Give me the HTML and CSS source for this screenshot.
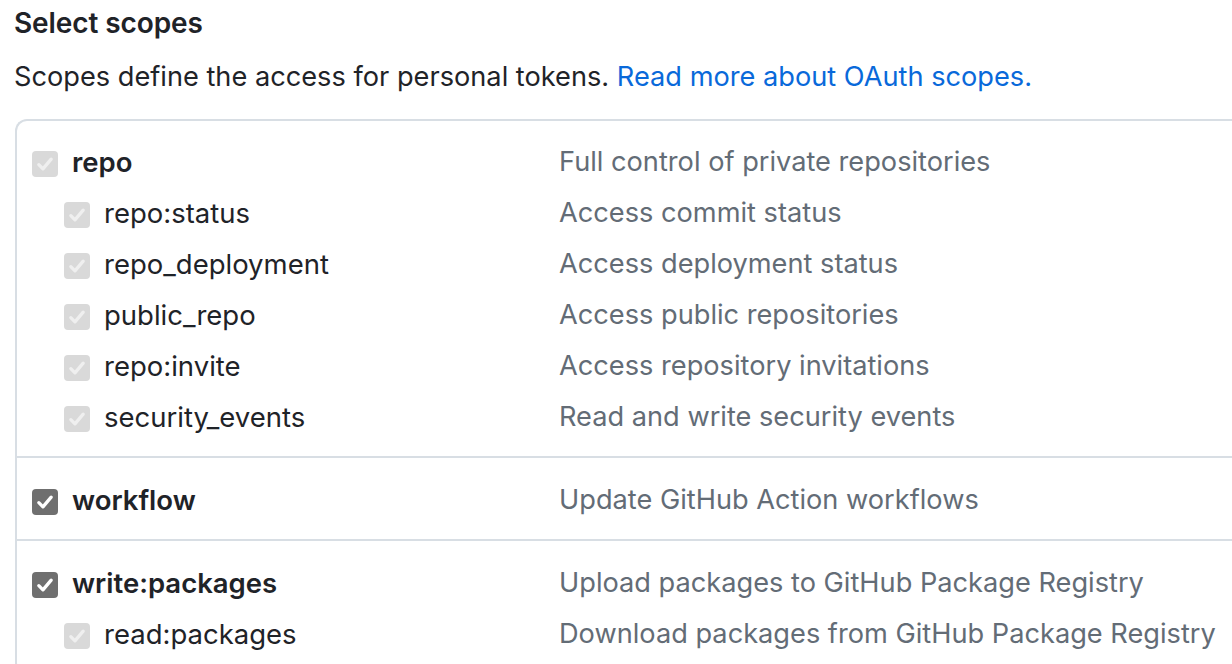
FILE: index.html
```html
<!DOCTYPE html>
<html>
<head>
<meta charset="utf-8">
<link rel="stylesheet" href="styles.css">
</head>
<body>
<div class="page">
  <h3 class="title">Select scopes</h3>
  <p class="lead">Scopes define the access for personal tokens. <a href="#" class="link">Read more about OAuth scopes.</a></p>
  <div class="box">
    <ul class="group">
      <li class="row main"><span class="cb disabled"><svg viewBox="0 0 16 16"><path d="M3.5 8.5l3 3 6-7"/></svg></span><span class="label">repo</span><span class="desc">Full control of private repositories</span></li>
      <li class="row sub"><span class="cb disabled"><svg viewBox="0 0 16 16"><path d="M3.5 8.5l3 3 6-7"/></svg></span><span class="label">repo:status</span><span class="desc">Access commit status</span></li>
      <li class="row sub"><span class="cb disabled"><svg viewBox="0 0 16 16"><path d="M3.5 8.5l3 3 6-7"/></svg></span><span class="label">repo_deployment</span><span class="desc">Access deployment status</span></li>
      <li class="row sub"><span class="cb disabled"><svg viewBox="0 0 16 16"><path d="M3.5 8.5l3 3 6-7"/></svg></span><span class="label">public_repo</span><span class="desc">Access public repositories</span></li>
      <li class="row sub"><span class="cb disabled"><svg viewBox="0 0 16 16"><path d="M3.5 8.5l3 3 6-7"/></svg></span><span class="label">repo:invite</span><span class="desc">Access repository invitations</span></li>
      <li class="row sub"><span class="cb disabled"><svg viewBox="0 0 16 16"><path d="M3.5 8.5l3 3 6-7"/></svg></span><span class="label">security_events</span><span class="desc">Read and write security events</span></li>
    </ul>
    <ul class="group">
      <li class="row main"><span class="cb checked"><svg viewBox="0 0 16 16"><path d="M3.5 8.5l3 3 6-7"/></svg></span><span class="label">workflow</span><span class="desc">Update GitHub Action workflows</span></li>
    </ul>
    <ul class="group">
      <li class="row main"><span class="cb checked"><svg viewBox="0 0 16 16"><path d="M3.5 8.5l3 3 6-7"/></svg></span><span class="label">write:packages</span><span class="desc">Upload packages to GitHub Package Registry</span></li>
      <li class="row sub"><span class="cb disabled"><svg viewBox="0 0 16 16"><path d="M3.5 8.5l3 3 6-7"/></svg></span><span class="label">read:packages</span><span class="desc">Download packages from GitHub Package Registry</span></li>
    </ul>
  </div>
</div>
</body>
</html>
```
FILE: styles.css
```css
html, body {
  margin: 0;
  padding: 0;
  background: #ffffff;
  overflow: hidden;
}
body {
  font-family: Inter, "Liberation Sans", sans-serif;
  color: #1f2328;
}
.page {
  padding: 0 0 0 14px;
}
.title {
  margin: 0;
  padding-top: 7px;
  height: 33px;
  font-size: 28px;
  line-height: 33px;
  font-weight: 600;
  letter-spacing: -0.1px;
}
.lead {
  margin: 0;
  padding-top: 16px;
  height: 41px;
  font-size: 27.2px;
  line-height: 41px;
  color: #1f2328;
  white-space: nowrap;
}
.link {
  color: #0969da;
  text-decoration: none;
}
.box {
  margin: 22px 0 0 1px;
  border: 2px solid #d8dee4;
  border-right: 0;
  border-radius: 12px 0 0 12px;
}
.group {
  list-style: none;
  margin: 0;
  padding: 16px 0 14px 0;
  border-top: 2px solid #d8dee4;
}
.group:first-child {
  border-top: 0;
  padding-top: 15px;
}
.row {
  display: grid;
  grid-template-columns: 26px 473px 1fr;
  column-gap: 14px;
  align-items: center;
  height: 51px;
  padding-left: 15px;
  font-size: 27.2px;
  white-space: nowrap;
}
.row.sub {
  grid-template-columns: 26px 441px 1fr;
  padding-left: 47px;
}
.label {
  font-size: 27.5px;
}
.row.main .label {
  font-weight: 600;
}
.desc {
  color: #636c76;
}
.cb {
  width: 26px;
  height: 26px;
  margin-top: 4px;
  border-radius: 4px;
  display: flex;
  align-items: center;
  justify-content: center;
}
.cb svg {
  width: 22px;
  height: 22px;
  fill: none;
  stroke: #ffffff;
  stroke-width: 2.4;
  stroke-linecap: round;
  stroke-linejoin: round;
}
.cb.disabled {
  background: #d9d9d9;
}
.cb.disabled svg {
  stroke: #efefef;
}
.cb.checked {
  background: #6f6f6f;
}
```
